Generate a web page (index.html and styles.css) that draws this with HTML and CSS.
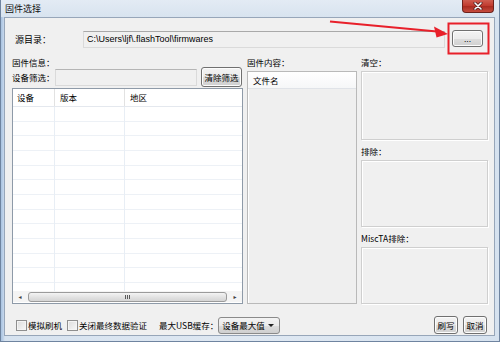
FILE: index.html
```html
<!DOCTYPE html>
<html>
<head>
<meta charset="utf-8">
<link rel="stylesheet" href="styles.css">
</head>
<body>
<div class="window">
  <div class="titlebar">
    <span class="title">固件选择</span>
    <div class="close">
      <svg width="10" height="8" viewBox="0 0 10 8"><path d="M2 1 L8 7 M8 1 L2 7" stroke="#4a1c1c" stroke-width="3" stroke-linecap="round"/><path d="M2 1 L8 7 M8 1 L2 7" stroke="#fff" stroke-width="1.6" stroke-linecap="round"/></svg>
    </div>
  </div>
  <div class="client">
    <div class="src-row">
      <span class="src-label">源目录：</span>
      <div class="path">C:\Users\ljf\.flashTool\firmwares</div>
      <button class="btn browse">...</button>
    </div>
    <div class="main">
      <div class="col left">
        <div class="lbl">固件信息：</div>
        <div class="filter-row">
          <span class="filter-label">设备筛选：</span>
          <div class="filter-input"></div>
          <button class="btn clear">清除筛选</button>
        </div>
        <div class="table">
          <div class="thead">
            <div class="th c1">设备</div>
            <div class="th c2">版本</div>
            <div class="th c3">地区</div>
          </div>
          <div class="tbody">
            <div class="vline v1"></div>
            <div class="vline v2"></div>
            <div class="row"></div><div class="row"></div><div class="row"></div><div class="row"></div>
            <div class="row"></div><div class="row"></div><div class="row"></div><div class="row"></div>
            <div class="row"></div><div class="row"></div><div class="row"></div><div class="row"></div>
            <div class="row"></div>
          </div>
          <div class="hscroll">
            <span class="arr">&#9666;</span>
            <div class="thumb"><span class="grip"></span></div>
            <span class="arr">&#9656;</span>
          </div>
        </div>
      </div>
      <div class="col mid">
        <div class="lbl">固件内容：</div>
        <div class="list">
          <div class="list-head">文件名</div>
        </div>
      </div>
      <div class="col right">
        <div class="lbl">清空：</div>
        <div class="box b1"></div>
        <div class="lbl lbl-gap">排除：</div>
        <div class="box b2"></div>
        <div class="lbl lbl-gap">MiscTA排除：</div>
        <div class="box b3"></div>
      </div>
    </div>
    <div class="bottom">
      <label class="chk"><span class="cbox"></span>模拟刷机</label>
      <label class="chk"><span class="cbox"></span>关闭最终数据验证</label>
      <span class="usb-label">最大USB缓存：</span>
      <div class="combo"><span>设备最大值</span><span class="caret"></span></div>
      <div class="spacer"></div>
      <button class="btn small">刷写</button>
      <button class="btn small">取消</button>
    </div>
  </div>
  <svg class="annot" width="500" height="342" viewBox="0 0 500 342">
    <rect x="448.5" y="23.5" width="40" height="30" fill="none" stroke="#e8202a" stroke-width="2"/>
    <path d="M330 21.5 L437 31.5" stroke="#e8202a" stroke-width="2.2" fill="none"/>
    <path d="M448 34 L434 26.5 L436.5 37.5 Z" fill="#e8202a"/>
  </svg>
</div>
</body>
</html>
```

FILE: styles.css
```css
* { box-sizing: border-box; }
html, body { margin: 0; padding: 0; }
body {
  width: 500px;
  height: 342px;
  overflow: hidden;
  font-family: "Noto Sans CJK SC", "Liberation Sans", sans-serif;
  font-size: 8.5px;
  color: #000;
}
.window {
  position: relative;
  width: 500px;
  height: 342px;
  display: flex;
  flex-direction: column;
  background: linear-gradient(90deg, #a9c3e0 0, #bcd0e8 2px, #d6e2ef 4px, #dfe8f2 50%, #d6e2ef 100%);
  border: 1px solid #6f84a0;
  border-top: none;
}
.titlebar {
  height: 17px;
  flex: none;
  display: flex;
  align-items: flex-start;
  justify-content: space-between;
  background: linear-gradient(#e3ebf4, #d8e3ef);
}
.title {
  font-size: 9px;
  line-height: 9px;
  padding: 4px 0 0 4px;
  color: #111;
}
.close {
  flex: none;
  width: 32px;
  height: 13px;
  margin-right: 5px;
  border: 1px solid #6e211b;
  border-top: none;
  border-radius: 0 0 4px 4px;
  background: linear-gradient(#cf5d50 0%, #c0392d 50%, #a92a1f 51%, #c64c3e 100%);
  display: flex;
  align-items: center;
  justify-content: center;
}
.close svg { display: block; }
.client {
  flex: none;
  height: 319px;
  margin: 0 4px 0 3px;
  background: #f0f0f0;
  border: 1px solid #97a6b9;
  display: flex;
  flex-direction: column;
}
.src-row {
  display: flex;
  align-items: center;
  height: 18px;
  margin-top: 12px;
  padding-left: 10px;
}
.src-label {
  width: 68px;
  font-size: 9px;
}
.path {
  width: 362px;
  height: 17px;
  border: 1px solid #dadada;
  border-top-color: #a9a9a9;
  background: #f0f0f0;
  font-family: "Liberation Sans", sans-serif;
  font-size: 9px;
  line-height: 15px;
  padding-left: 3px;
}
.btn {
  font-family: "Noto Sans CJK SC", "Liberation Sans", sans-serif;
  font-size: 8.5px;
  padding: 0;
  border: 1px solid #707070;
  border-radius: 3px;
  background: linear-gradient(#f3f3f3, #ebebeb 50%, #dddddd 51%, #cfcfcf);
  box-shadow: inset 0 0 0 1px #fcfcfc;
  color: #000;
  display: flex;
  align-items: center;
  justify-content: center;
}
.browse {
  width: 31px;
  height: 17px;
  margin-left: 7px;
  margin-top: -1px;
  font-family: "Liberation Sans", sans-serif;
  line-height: 10px;
}
.main {
  display: flex;
  gap: 4px;
  margin-top: 7px;
  padding-left: 7px;
  height: 249px;
}
.col { display: flex; flex-direction: column; }
.lbl {
  height: 14px;
  line-height: 14px;
  font-size: 8.5px;
  flex: none;
}
.left { width: 231px; }
.mid { width: 110px; }
.right { width: 127px; }
.filter-row {
  display: flex;
  align-items: center;
  height: 20px;
  margin-top: -2px;
  flex: none;
}
.filter-label { width: 43px; }
.filter-input {
  width: 142px;
  height: 17px;
  border: 1px solid #dadada;
  border-top-color: #b5b5b5;
  background: #f0f0f0;
}
.clear {
  width: 41px;
  height: 20px;
  margin-left: 4px;
}
.table {
  margin-top: 1px;
  flex: 1;
  border: 1px solid #8e9aa8;
  background: #fff;
  display: flex;
  flex-direction: column;
  overflow: hidden;
}
.thead {
  display: flex;
  height: 18px;
  flex: none;
  border-bottom: 1px solid #e4e8ee;
}
.th {
  line-height: 17px;
  padding-left: 4px;
  border-right: 1px solid #e2e2e2;
}
.c1 { width: 42px; }
.c2 { width: 70px; padding-left: 5px; }
.c3 { flex: 1; padding-left: 5px; border-right: none; }
.tbody {
  position: relative;
  flex: 1;
  overflow: hidden;
}
.row {
  height: 14.66px;
  border-bottom: 1px solid #edf1f6;
}
.vline {
  position: absolute;
  top: 0;
  bottom: 0;
  width: 1px;
  background: #e8eef5;
}
.v1 { left: 41px; }
.v2 { left: 111px; }
.hscroll {
  height: 11px;
  flex: none;
  display: flex;
  align-items: center;
  background: #f4f4f4;
  margin-bottom: 1px;
}
.arr {
  width: 14px;
  text-align: center;
  font-size: 6px;
  color: #404040;
  font-family: "DejaVu Sans", sans-serif;
}
.thumb {
  flex: 1;
  height: 10px;
  border: 1px solid #9b9b9b;
  border-radius: 3px;
  background: linear-gradient(#f4f4f4, #e3e3e3 50%, #d5d5d5);
  display: flex;
  align-items: center;
  justify-content: center;
  margin: 0 1px;
}
.grip {
  width: 5px;
  height: 4px;
  background: repeating-linear-gradient(90deg, #5a5a5a 0 1px, transparent 1px 2px);
}
.list {
  margin-top: 2px;
  flex: 1;
  border: 1px solid #b9b9b9;
  box-shadow: inset 1px 1px 0 #fff;
  background: #efefef;
}
.list-head {
  height: 17px;
  line-height: 17px;
  padding-left: 5px;
  background: linear-gradient(#ffffff, #f6f7f8);
  border-bottom: 1px solid #e0e3e8;
  font-size: 8.5px;
}
.box {
  flex: none;
  margin-top: 2px;
  border: 1px solid #cfcfcf;
  box-shadow: inset 1px 1px 0 #fff, 1px 1px 0 #fff;
  background: #f0f0f0;
}
.b1 { height: 69px; }
.b2 { height: 67px; }
.b3 { flex: 1; }
.lbl-gap { margin-top: 4px; }
.bottom {
  display: flex;
  align-items: center;
  height: 18px;
  margin-top: 12px;
  padding-left: 11px;
  padding-right: 7px;
}
.chk {
  display: flex;
  align-items: center;
  margin-right: 5px;
}
.cbox {
  width: 11px;
  height: 11px;
  border: 1px solid #8f8f8f;
  background: linear-gradient(135deg, #dcdcdc, #f8f8f8);
  box-shadow: inset 0 0 0 1px #f4f4f4;
  margin-right: 1px;
}
.usb-label { margin-left: 7px; }
.combo {
  width: 62px;
  height: 17px;
  margin-left: 0;
  border: 1px solid #8a8a8a;
  border-radius: 3px;
  background: linear-gradient(#f3f3f3, #ebebeb 50%, #dddddd 51%, #cfcfcf);
  display: flex;
  align-items: center;
  justify-content: space-between;
  padding: 0 5px 0 3px;
}
.caret {
  width: 0;
  height: 0;
  border-left: 3px solid transparent;
  border-right: 3px solid transparent;
  border-top: 3px solid #222;
}
.spacer { flex: 1; }
.small {
  width: 24px;
  height: 18px;
  margin-left: 5px;
}
.annot {
  position: absolute;
  left: -1px;
  top: 0;
  pointer-events: none;
}
```
